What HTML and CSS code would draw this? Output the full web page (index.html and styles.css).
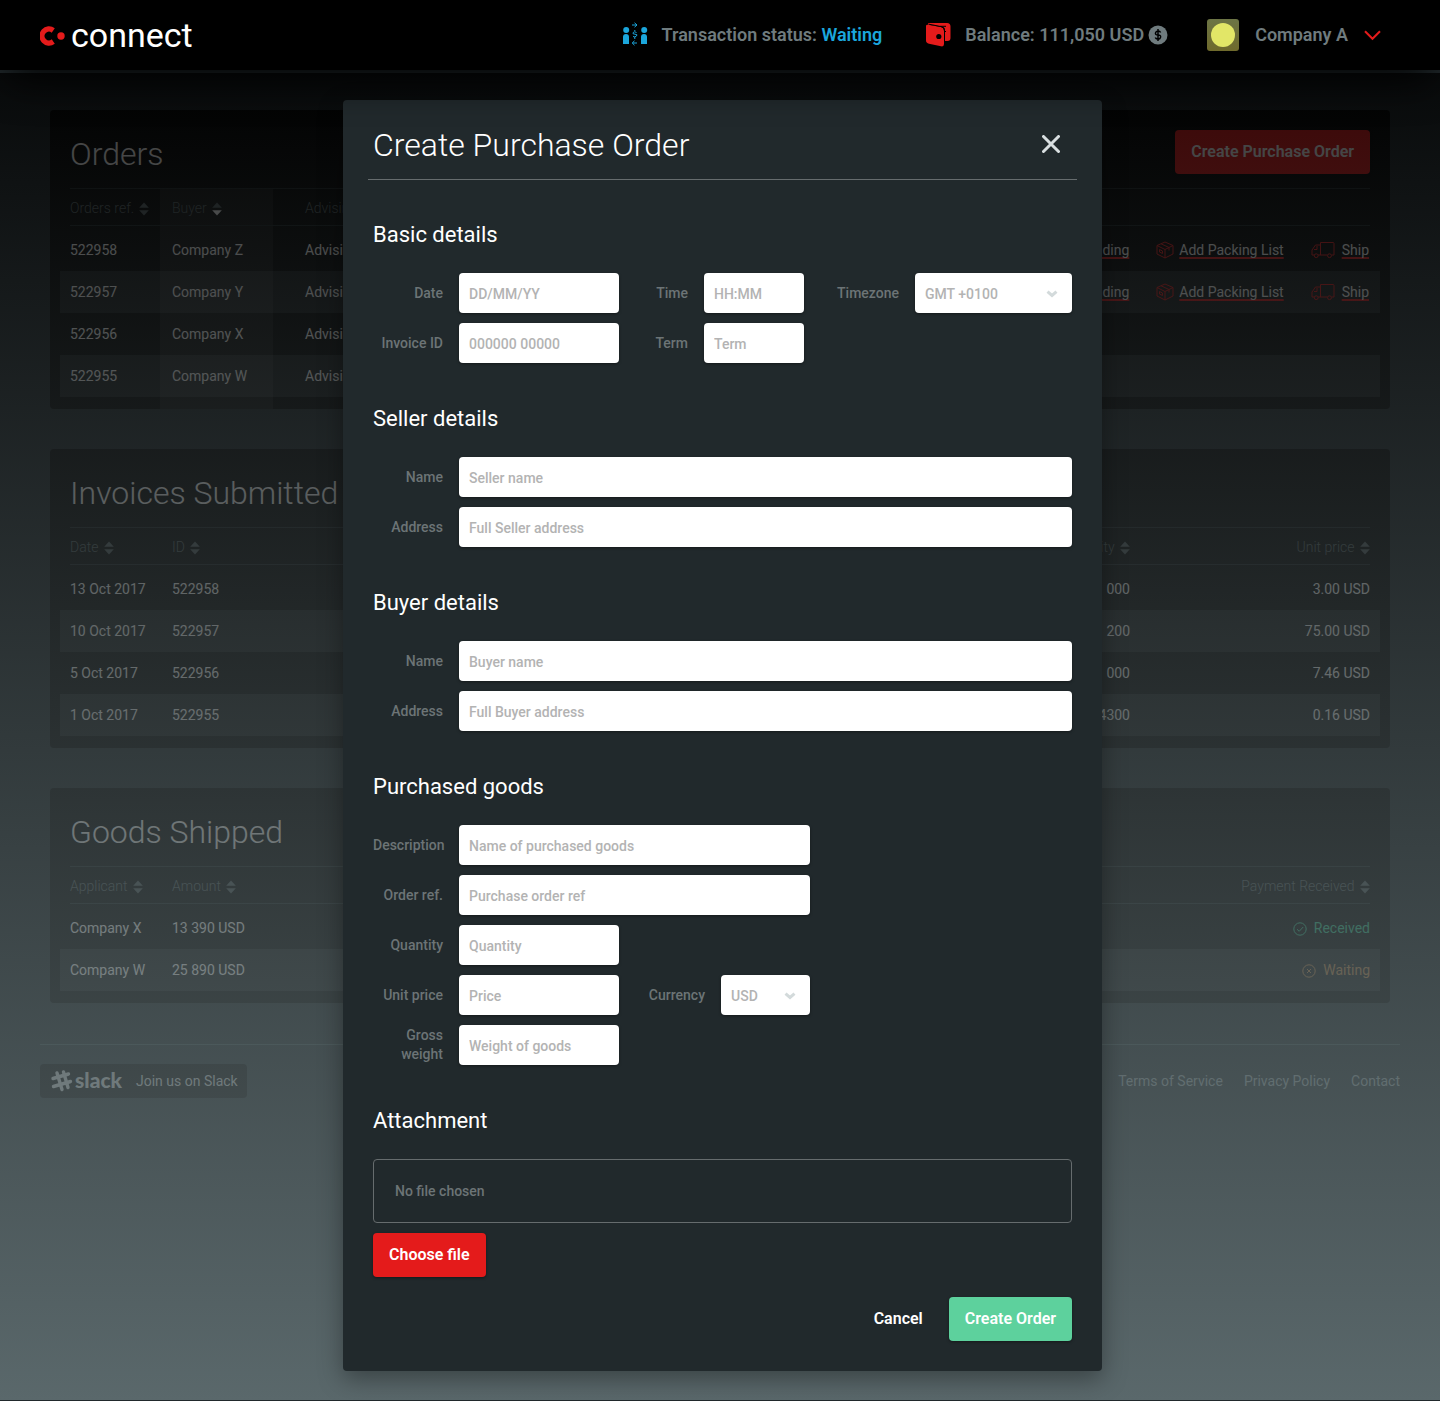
FILE: index.html
```html
<!DOCTYPE html>
<html lang="en">
<head>
<meta charset="utf-8">
<meta name="viewport" content="width=device-width, initial-scale=1">
<title>Connect – Create Purchase Order</title>
<link rel="stylesheet" href="styles.css">
</head>
<body>
<svg class="sprite" aria-hidden="true">
  <symbol id="sort" viewBox="0 0 10 14"><path class="up" d="M5 0.5 9.8 5.7H.2z"/><path class="down" d="M5 13.5 .2 8.3H9.8z"/></symbol>
  <symbol id="box" viewBox="0 0 18 18"><path d="M9 1 17 4.500V13L9 17 1 13V4.500zM1 4.500 9 8.500 17 4.500M9 8.500V17M5 2.800 13 6.500V9.500M3.500 8.500 6.500 10V12.500L3.500 11z"/></symbol>
  <symbol id="truck" viewBox="0 0 24 18"><path d="M9.500 14V1.500H22Q23 1.500 23 2.500V14H20.500M16.500 14H7M3.500 14H1V9L4.500 4H9.500M3 8.500H6V5"/><circle cx="5.200" cy="14.700" r="1.900"/><circle cx="18.500" cy="14.700" r="1.900"/></symbol>
  <symbol id="chevron" viewBox="0 0 12 8"><path d="M1.500 1.700 6 5.500 10.500 1.700"/></symbol>
</svg>

<header class="topbar">
  <a class="logo" href="#">
    <svg width="25" height="22" viewBox="0 0 25 22" aria-hidden="true"><path d="M14.800 3.200A9.700 9.700 0 1 0 14.800 18.800L11.700 14.300A4.300 4.300 0 1 1 11.700 7.700z" fill="#e41b1b"/><circle cx="21" cy="11" r="3.700" fill="#e41b1b"/></svg>
    <span>connect</span>
  </a>
  <div class="status">
    <svg width="25" height="26" viewBox="0 0 25 26" fill="#1ba6dc" aria-hidden="true"><circle cx="3.200" cy="8" r="3"/><path d="M0 22V15Q0 12 3 12T6 15V22z"/><circle cx="21.200" cy="8" r="3"/><path d="M18 22V15Q18 12 21 12T24 15V22z"/><path d="M9 3H14M11.500 .800 14 3 11.500 5.200M14 21H9.500M11.500 18.800 9.200 21 11.500 23.200M13.500 10.500Q11.500 9 10.200 10.500T12 12.200T13.500 14T10 14.500M11.800 8V9M11.800 15V17" fill="none" stroke="#1ba6dc" stroke-width="1"/></svg>
    <span>Transaction status: <b>Waiting</b></span>
  </div>
  <div class="balance">
    <svg width="25" height="24" viewBox="0 0 25 24" aria-hidden="true"><path d="M2.500 0H21Q24.500 0 24.500 3.500V15Q24.500 18 21.500 18H19V7Q19 4 16 3.500L2 1.500z" fill="#e41b1b"/><path d="M0 3Q0 1.500 2 1.800L15 4Q18 4.600 18 7.500V21Q18 24 15 23.300L3 20.800Q0 20 0 17.500z" fill="#e41b1b"/><path d="M3 1.200 15 3.600Q18.500 4.300 18.500 8V20M14 3.300H20M18 8.500H20" fill="none" stroke="#000" stroke-width="1"/><circle cx="12.800" cy="13.500" r="2.600"/></svg>
    <span>Balance: 111,050 USD</span>
    <svg class="coin" width="20" height="20" viewBox="0 0 20 20" aria-hidden="true"><circle cx="10" cy="10" r="9.500" fill="#6f7b7e"/><path d="M12.600 7.500Q12 6 10 6T7.500 8T10 10T12.600 12.200T10 14.200T7.300 12.500M10 4V16" fill="none" stroke="#000" stroke-width="1.500"/></svg>
  </div>
  <button class="account" type="button">
    <span class="avatar"><span></span></span>
    <span>Company A</span>
    <svg width="17" height="11" viewBox="0 0 17 11" aria-hidden="true"><path d="M1 1.200 8.500 8.800 16 1.200" fill="none" stroke="#e41b1b" stroke-width="2"/></svg>
  </button>
</header>

<div class="stage">
  <div class="page">
    <main>
      <section class="card">
        <div class="card-head"><h2>Orders</h2><button class="btn btn-red" type="button">Create Purchase Order</button></div>
        <table>
          <colgroup><col class="c-ref"><col class="c-buyer"><col><col class="c-actions"></colgroup>
          <thead><tr>
            <th>Orders ref. <svg class="sort tight"><use href="#sort"/></svg></th>
            <th class="sorted">Buyer <svg class="sort" viewBox="0 0 10 14"><path d="M5 0.5 9.8 5.7H.2z"/><path class="on" d="M5 13.5 .2 8.3H9.8z"/></svg></th>
            <th class="adv">Advising bank</th><th></th>
          </tr></thead>
          <tbody>
            <tr><td>522958</td><td class="sorted">Company Z</td><td class="adv">Advising bank</td><td><div class="actions"><a href="#">Bill of Lading</a><a href="#"><svg class="ico-box"><use href="#box"/></svg><span>Add Packing List</span></a><a class="ship" href="#"><svg class="ico-truck"><use href="#truck"/></svg><span>Ship</span></a></div></td></tr>
            <tr><td>522957</td><td class="sorted">Company Y</td><td class="adv">Advising bank</td><td><div class="actions"><a href="#">Bill of Lading</a><a href="#"><svg class="ico-box"><use href="#box"/></svg><span>Add Packing List</span></a><a class="ship" href="#"><svg class="ico-truck"><use href="#truck"/></svg><span>Ship</span></a></div></td></tr>
            <tr><td>522956</td><td class="sorted">Company X</td><td class="adv">Advising bank</td><td></td></tr>
            <tr><td>522955</td><td class="sorted">Company W</td><td class="adv">Advising bank</td><td></td></tr>
          </tbody>
        </table>
      </section>

      <section class="card">
        <div class="card-head"><h2>Invoices Submitted</h2></div>
        <table>
          <colgroup><col class="c-first"><col><col><col class="c-last"></colgroup>
          <thead><tr>
            <th>Date <svg class="sort"><use href="#sort"/></svg></th>
            <th>ID <svg class="sort"><use href="#sort"/></svg></th>
            <th class="num">Quantity <svg class="sort"><use href="#sort"/></svg></th>
            <th class="num">Unit price <svg class="sort"><use href="#sort"/></svg></th>
          </tr></thead>
          <tbody>
            <tr><td>13 Oct 2017</td><td>522958</td><td class="num">1 000</td><td class="num">3.00 USD</td></tr>
            <tr><td>10 Oct 2017</td><td>522957</td><td class="num">200</td><td class="num">75.00 USD</td></tr>
            <tr><td>5 Oct 2017</td><td>522956</td><td class="num">1 000</td><td class="num">7.46 USD</td></tr>
            <tr><td>1 Oct 2017</td><td>522955</td><td class="num">4300</td><td class="num">0.16 USD</td></tr>
          </tbody>
        </table>
      </section>

      <section class="card">
        <div class="card-head"><h2>Goods Shipped</h2></div>
        <table>
          <colgroup><col class="c-first"><col><col class="c-last"></colgroup>
          <thead><tr>
            <th>Applicant <svg class="sort"><use href="#sort"/></svg></th>
            <th>Amount <svg class="sort"><use href="#sort"/></svg></th>
            <th class="num">Payment Received <svg class="sort"><use href="#sort"/></svg></th>
          </tr></thead>
          <tbody>
            <tr><td>Company X</td><td>13 390 USD</td><td class="num received"><svg class="ico-state" viewBox="0 0 14 14"><circle cx="7" cy="7" r="6.200"/><path d="M4 7.200 6.200 9.300 10.200 5"/></svg>Received</td></tr>
            <tr><td>Company W</td><td>25 890 USD</td><td class="num waiting"><svg class="ico-state" viewBox="0 0 14 14"><circle cx="7" cy="7" r="6.200"/><path d="M5 5 9 9M9 5 5 9"/></svg>Waiting</td></tr>
          </tbody>
        </table>
      </section>
    </main>

    <footer class="footer">
      <a class="slack" href="#">
        <svg width="23" height="24" viewBox="0 0 23 24" aria-hidden="true"><path d="M7 4 12 20.500M13.500 3 18 18.500M3 9.500 18.500 5M3.500 17.500 20.500 12.500" fill="none" stroke="currentColor" stroke-width="3.400" stroke-linecap="round"/></svg>
        <b>slack</b><span>Join us on Slack</span>
      </a>
      <nav><a href="#">Terms of Service</a><a href="#">Privacy Policy</a><a href="#">Contact</a></nav>
    </footer>
  </div>

  <div class="overlay">
    <form class="modal" role="dialog" aria-labelledby="modal-title">
      <div class="modal-head">
        <h1 id="modal-title">Create Purchase Order</h1>
        <button class="close" type="button" aria-label="Close"><svg width="18" height="18" viewBox="0 0 18 18"><path d="M1.500 1.500 16.500 16.500M16.500 1.500 1.500 16.500" fill="none" stroke="#d9dfe1" stroke-width="3" stroke-linecap="round"/></svg></button>
      </div>

      <section class="group">
        <h3>Basic details</h3>
        <div class="fields basic">
          <label for="date">Date</label><input id="date" type="text" placeholder="DD/MM/YY">
          <label for="time">Time</label><input id="time" type="text" placeholder="HH:MM">
          <label for="tz">Timezone</label><div class="select"><select id="tz"><option>GMT +0100</option></select><svg><use href="#chevron"/></svg></div>
          <label for="invoice">Invoice ID</label><input id="invoice" type="text" placeholder="000000 00000">
          <label for="term">Term</label><input id="term" type="text" placeholder="Term">
        </div>
      </section>

      <section class="group">
        <h3>Seller details</h3>
        <div class="fields wide">
          <label for="s-name">Name</label><input id="s-name" type="text" placeholder="Seller name">
          <label for="s-addr">Address</label><input id="s-addr" type="text" placeholder="Full Seller address">
        </div>
      </section>

      <section class="group">
        <h3>Buyer details</h3>
        <div class="fields wide">
          <label for="b-name">Name</label><input id="b-name" type="text" placeholder="Buyer name">
          <label for="b-addr">Address</label><input id="b-addr" type="text" placeholder="Full Buyer address">
        </div>
      </section>

      <section class="group">
        <h3>Purchased goods</h3>
        <div class="fields goods">
          <label for="desc">Description</label><input class="span" id="desc" type="text" placeholder="Name of purchased goods">
          <label for="ref">Order ref.</label><input class="span" id="ref" type="text" placeholder="Purchase order ref">
          <label class="first" for="qty">Quantity</label><input id="qty" type="text" placeholder="Quantity">
          <label class="first" for="price">Unit price</label><input id="price" type="text" placeholder="Price">
          <label for="cur">Currency</label><div class="select"><select id="cur"><option>USD</option></select><svg><use href="#chevron"/></svg></div>
          <label class="first" for="weight">Gross weight</label><input id="weight" type="text" placeholder="Weight of goods">
        </div>
      </section>

      <section class="group">
        <h3>Attachment</h3>
        <div class="file-box">No file chosen</div>
        <button class="btn btn-red" type="button">Choose file</button>
      </section>

      <div class="modal-foot">
        <button class="btn btn-plain" type="button">Cancel</button>
        <button class="btn btn-green" type="submit">Create Order</button>
      </div>
    </form>
  </div>
</div>
</body>
</html>
```
FILE: styles.css
```css
* { box-sizing: border-box; }

body {
  margin: 0;
  min-height: 100vh;
  background: #21292c;
  color: #fff;
  font: 400 14px/19px Roboto, "Liberation Sans", sans-serif;
}

h1, h2, h3 { margin: 0; font-weight: 300; }
a { color: inherit; text-decoration: none; }
button { font: inherit; color: inherit; border: 0; background: none; padding: 0; cursor: pointer; }
svg { flex: none; display: block; }
.sprite { position: absolute; width: 0; height: 0; }

/* Top bar */
.topbar {
  position: relative;
  z-index: 3;
  display: flex;
  align-items: center;
  height: 70px;
  padding: 0 59px 0 40px;
  background: #000;
  box-shadow: 0 16px 40px -8px #000;
  color: #6f7b7e;
  font-size: 18px;
  font-weight: 600;
  line-height: 20px;
}
.logo { display: flex; align-items: center; gap: 6px; margin-right: auto; color: #fff; font-size: 34px; font-weight: 400; line-height: 40px; }
.logo svg { margin-top: 2px; }
.status, .balance, .account { display: flex; align-items: center; gap: 14px; }
.status { margin-right: 44px; }
.status b { color: #1ba6dc; font-weight: 600; }
.balance { margin-right: 39px; }
.coin { margin-left: -10px; }
.account { gap: 16px; }
.avatar { display: grid; place-items: center; width: 32px; height: 32px; border-radius: 3px; background: linear-gradient(#6c7445, #6f6a2c); }
.avatar span { width: 24px; height: 24px; border-radius: 50%; background: #e2e667; }

/* Page and overlay share one cell */
.stage { display: grid; border-top: 3px solid #21292c; }
.page, .overlay { grid-area: 1 / 1; min-width: 0; }
.page { padding: 37px 40px 0; }
main { display: grid; gap: 40px; padding: 0 10px; }

.card { padding: 0 20px 12px; border-radius: 4px; background: #050606; }
.card-head { display: flex; align-items: center; justify-content: space-between; height: 78px; padding-top: 6px; }
h2 { padding-top: 4px; font-size: 32px; line-height: 40px; font-weight: 300; }

table { width: 100%; table-layout: fixed; border-collapse: separate; border-spacing: 0; }
.c-ref { width: 90px; }
.c-buyer { width: 113px; }
.c-actions { width: 700px; }
.c-first { width: 102px; }
.c-last { width: 240px; }
th, td { padding: 0; text-align: left; white-space: nowrap; }
th { height: 38px; border: solid #20282a; border-width: 1px 0; color: #5a6669; font-weight: 300; padding-top: 2px; }
td { height: 42px; }
tbody tr:first-child td { height: 45px; padding-top: 3px; }
tbody tr:nth-child(even) { background: #1c2021; box-shadow: -10px 0 #1c2021, 10px 0 #1c2021; }
.sorted { padding-left: 12px; background: rgba(255, 255, 255, .07); background-clip: padding-box; }
tbody tr:last-child .sorted { box-shadow: 0 12px rgba(255, 255, 255, .07); }
.adv { padding-left: 32px; }
.num { text-align: right; }
.sort { display: inline-block; width: 10px; height: 14px; margin-left: 2px; vertical-align: -3px; fill: #5a6669; }
.sort.tight { margin-left: 1px; }
.sort .on { fill: #fff; }

.actions { display: flex; align-items: center; justify-content: flex-end; gap: 27px; padding-right: 1px; }
.actions a { display: flex; align-items: center; gap: 5px; text-decoration: underline #e41b1b 2px; text-underline-offset: 2px; text-decoration-skip-ink: none; }
.actions .ship { gap: 7px; }
.ico-box, .ico-truck { width: 18px; height: 18px; fill: none; stroke: #e41b1b; }
.ico-truck { width: 24px; }
.ico-state { display: inline-block; width: 14px; height: 14px; margin-right: 7px; vertical-align: -3px; fill: none; stroke: currentColor; }
.received { color: #2fc48e; }
.waiting { color: #c08a50; }

.footer { display: flex; align-items: center; justify-content: space-between; margin-top: 41px; padding-top: 19px; border-top: 1px solid #3d5051; }
.slack { display: flex; align-items: center; height: 34px; padding: 0 9px 0 10px; border-radius: 4px; background: #060606; color: #c4c8c9; }
.slack b { margin: 0 14px 3px 2px; font: 900 21px/24px Lato, sans-serif; }
.footer nav { display: flex; gap: 21px; color: #8c999c; }

.overlay {
  z-index: 2;
  padding: 27px 0 29px 5px;
  background: linear-gradient(rgba(0, 0, 0, .75), rgba(109, 125, 128, .75));
}

/* Dialog */
.modal {
  max-width: 759px;
  margin: 0 auto;
  padding: 0 25px 30px;
  border-radius: 4px;
  background: #21292c;
  box-shadow: 0 8px 24px rgba(0, 0, 0, .35);
}
.modal-head { display: flex; align-items: center; justify-content: space-between; height: 80px; margin-bottom: 41px; padding: 9px 17px 0 5px; border-bottom: 1px solid #666c6e; }
h1 { padding-top: 2px; font-size: 32px; line-height: 40px; }
.group { padding: 0 5px; }
.group + .group { margin-top: 42px; }
h3 { margin-bottom: 25px; font-size: 22px; line-height: 27px; font-weight: 400; }

.fields { display: grid; align-items: center; gap: 10px 16px; color: #6c7476; font-weight: 500; }
.basic { grid-template-columns: 70px 160px 53px 100px 79px 1fr; }
.wide { grid-template-columns: 70px 1fr; }
.goods { grid-template-columns: 70px 160px 70px 89px; }
.goods .span { grid-column: span 3; }
.goods .first { grid-column: 1; }
label { text-align: right; }

input, select {
  width: 100%;
  min-width: 0;
  height: 40px;
  padding: 2px 10px 0;
  border: 0;
  border-radius: 4px;
  background: #fff;
  box-shadow: 0 1px 3px rgba(0, 0, 0, .4);
  color: #b3b3b3;
  font: 500 14px/19px Roboto, sans-serif;
  appearance: none;
}
::placeholder { color: #b3b3b3; opacity: 1; }
.select { display: grid; align-items: center; }
.select > * { grid-area: 1 / 1; }
.select svg { justify-self: end; width: 12px; height: 8px; margin: 2px 14px 0 0; fill: none; stroke: #d3dadb; stroke-width: 3; pointer-events: none; }

.file-box { margin-bottom: 10px; padding: 22px 21px 21px; border: 1px solid #666c6e; border-radius: 4px; color: #6c7476; font-weight: 500; }

.btn { height: 44px; padding: 0 16px; border-radius: 4px; font-size: 16px; font-weight: 600; line-height: 20px; }
.btn-red { background: #e41b1b; box-shadow: 0 1px 3px rgba(0, 0, 0, .4); }
.btn-green { background: #5dd19d; box-shadow: 0 1px 3px rgba(0, 0, 0, .4); }
.modal-foot { display: flex; justify-content: flex-end; gap: 10px; margin-top: 20px; padding: 0 5px; }
```
